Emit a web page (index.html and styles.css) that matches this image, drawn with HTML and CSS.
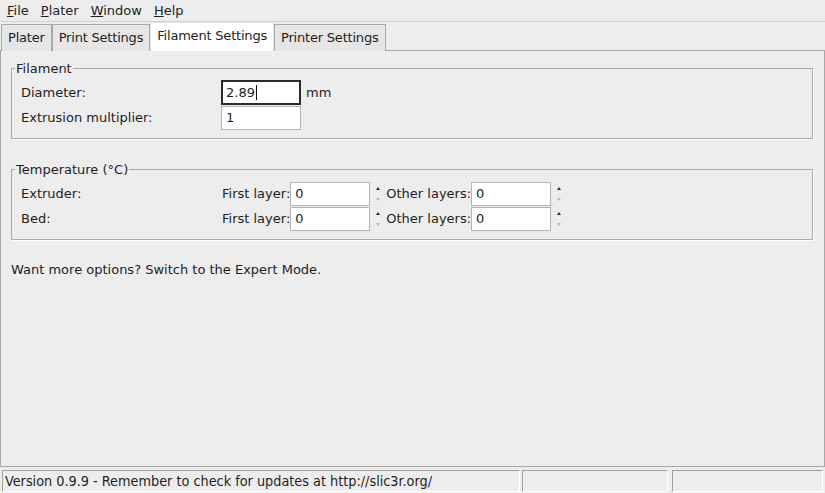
FILE: index.html
```html
<!DOCTYPE html>
<html>
<head>
<meta charset="utf-8">
<link rel="stylesheet" href="styles.css">
</head>
<body>
<div class="app">
  <div class="menubar">
    <span class="menu"><u>F</u>ile</span>
    <span class="menu"><u>P</u>later</span>
    <span class="menu"><u>W</u>indow</span>
    <span class="menu"><u>H</u>elp</span>
  </div>
  <div class="tabs">
    <div class="tab">Plater</div>
    <div class="tab">Print Settings</div>
    <div class="tab active">Filament Settings</div>
    <div class="tab">Printer Settings</div>
  </div>
  <div class="panel">
    <fieldset class="group g1">
      <legend>Filament</legend>
      <div class="row">
        <div class="label">Diameter:</div>
        <div class="field focus">2.89<span class="caret"></span></div>
        <div class="unit">mm</div>
      </div>
      <div class="row">
        <div class="label">Extrusion multiplier:</div>
        <div class="field">1</div>
      </div>
    </fieldset>
    <fieldset class="group g2">
      <legend>Temperature (°C)</legend>
      <div class="row">
        <div class="label">Extruder:</div>
        <div class="sub">First layer:</div>
        <div class="field">0</div>
        <div class="spin"><svg width="8" height="24" viewBox="0 0 8 24"><path d="M2 8 L4 5 L6 8 Z" fill="#2e2e2e"/><path d="M2 16 L4 19 L6 16 Z" fill="#b8b8b8"/></svg></div>
        <div class="sub">Other layers:</div>
        <div class="field">0</div>
        <div class="spin"><svg width="8" height="24" viewBox="0 0 8 24"><path d="M2 8 L4 5 L6 8 Z" fill="#2e2e2e"/><path d="M2 16 L4 19 L6 16 Z" fill="#b8b8b8"/></svg></div>
      </div>
      <div class="row">
        <div class="label">Bed:</div>
        <div class="sub">First layer:</div>
        <div class="field">0</div>
        <div class="spin"><svg width="8" height="24" viewBox="0 0 8 24"><path d="M2 8 L4 5 L6 8 Z" fill="#2e2e2e"/><path d="M2 16 L4 19 L6 16 Z" fill="#b8b8b8"/></svg></div>
        <div class="sub">Other layers:</div>
        <div class="field">0</div>
        <div class="spin"><svg width="8" height="24" viewBox="0 0 8 24"><path d="M2 8 L4 5 L6 8 Z" fill="#2e2e2e"/><path d="M2 16 L4 19 L6 16 Z" fill="#b8b8b8"/></svg></div>
      </div>
    </fieldset>
    <p class="hint">Want more options? Switch to the Expert Mode.</p>
  </div>
  <div class="statusbar">
    <div class="sfield s1">Version 0.9.9 - Remember to check for updates at http://slic3r.org/</div>
    <div class="sfield s2"></div>
    <div class="sfield s3"></div>
  </div>
</div>
</body>
</html>
```
FILE: styles.css
```css
html, body {
  margin: 0;
  padding: 0;
}
body {
  background: #ededed;
  font-family: "DejaVu Sans", sans-serif;
  font-size: 13px;
  color: #1e1e1e;
}
.app {
  width: 825px;
  height: 493px;
  display: flex;
  flex-direction: column;
  overflow: hidden;
}
.menubar {
  display: flex;
  align-items: center;
  padding: 1px 0 0 1px;
  border-bottom: 1px solid #d2d2d2;
  box-sizing: border-box;
  height: 22px;
}
.menu {
  padding: 0 6px;
  line-height: 20px;
}
.tabs {
  display: flex;
  align-items: flex-end;
  height: 29px;
  padding-left: 1px;
  position: relative;
  z-index: 1;
  margin-bottom: -1px;
}
.tab {
  height: 27px;
  box-sizing: border-box;
  border: 1px solid #a9a9a9;
  border-bottom: none;
  background: #e6e6e6;
  padding: 0 6px;
  letter-spacing: -0.2px;
  line-height: 25px;
}
.tab.active {
  height: 29px;
  background: #ffffff;
  border-color: #e2e2e2;
  line-height: 26px;
  padding: 0 6px;
  position: relative;
}
.panel {
  flex: 1;
  border: 1px solid #a9a9a9;
  padding: 10px 11px 0 10px;
}
.group {
  margin: 0;
  border: 1px solid #aaaaaa;
  box-shadow: 1px 1px 0 #ffffff;
  padding: 4px 10px 8px 9px;
  min-width: 0;
}
.group legend {
  padding: 0 1px;
  margin-left: -6px;
  line-height: 15px;
}
.g2 {
  margin-top: 23px;
}
.row {
  display: flex;
  align-items: center;
  height: 25px;
}
.label {
  width: 200px;
  flex: none;
}
.field {
  width: 80px;
  height: 24px;
  box-sizing: border-box;
  background: #ffffff;
  border: 1px solid #b4b4b4;
  padding: 0 4px;
  line-height: 22px;
  flex: none;
  display: flex;
  align-items: center;
}
.field.focus {
  border: 2px solid #2a2a2a;
  padding-left: 3px;
  height: 25px;
}
.caret {
  display: inline-block;
  width: 1px;
  height: 15px;
  background: #111;
  margin-left: 1px;
}
.unit {
  margin-left: 5px;
}
.sub {
  flex: none;
  margin-left: 1px;
}
.spin {
  width: 15px;
  height: 24px;
  display: flex;
  justify-content: center;
  flex: none;
}
.hint {
  margin: 22px 0 0 0;
  line-height: 15px;
}
.statusbar {
  height: 26px;
  display: flex;
  padding: 3px 2px 1px 2px;
  box-sizing: border-box;
}
.sfield {
  height: 22px;
  box-sizing: border-box;
  border-top: 1px solid #a0a0a0;
  border-left: 1px solid #a0a0a0;
  border-right: 1px solid #ffffff;
  border-bottom: 1px solid #ffffff;
  font-family: "DejaVu Sans Condensed", "DejaVu Sans", sans-serif;
  font-stretch: condensed;
  font-size: 14.3px;
  line-height: 20px;
  padding-left: 2px;
  white-space: nowrap;
  overflow: hidden;
}
.s1 { width: 518px; }
.s2 { width: 146px; margin-left: 2px; }
.s3 { flex: 1; margin-left: 4px; }
```
